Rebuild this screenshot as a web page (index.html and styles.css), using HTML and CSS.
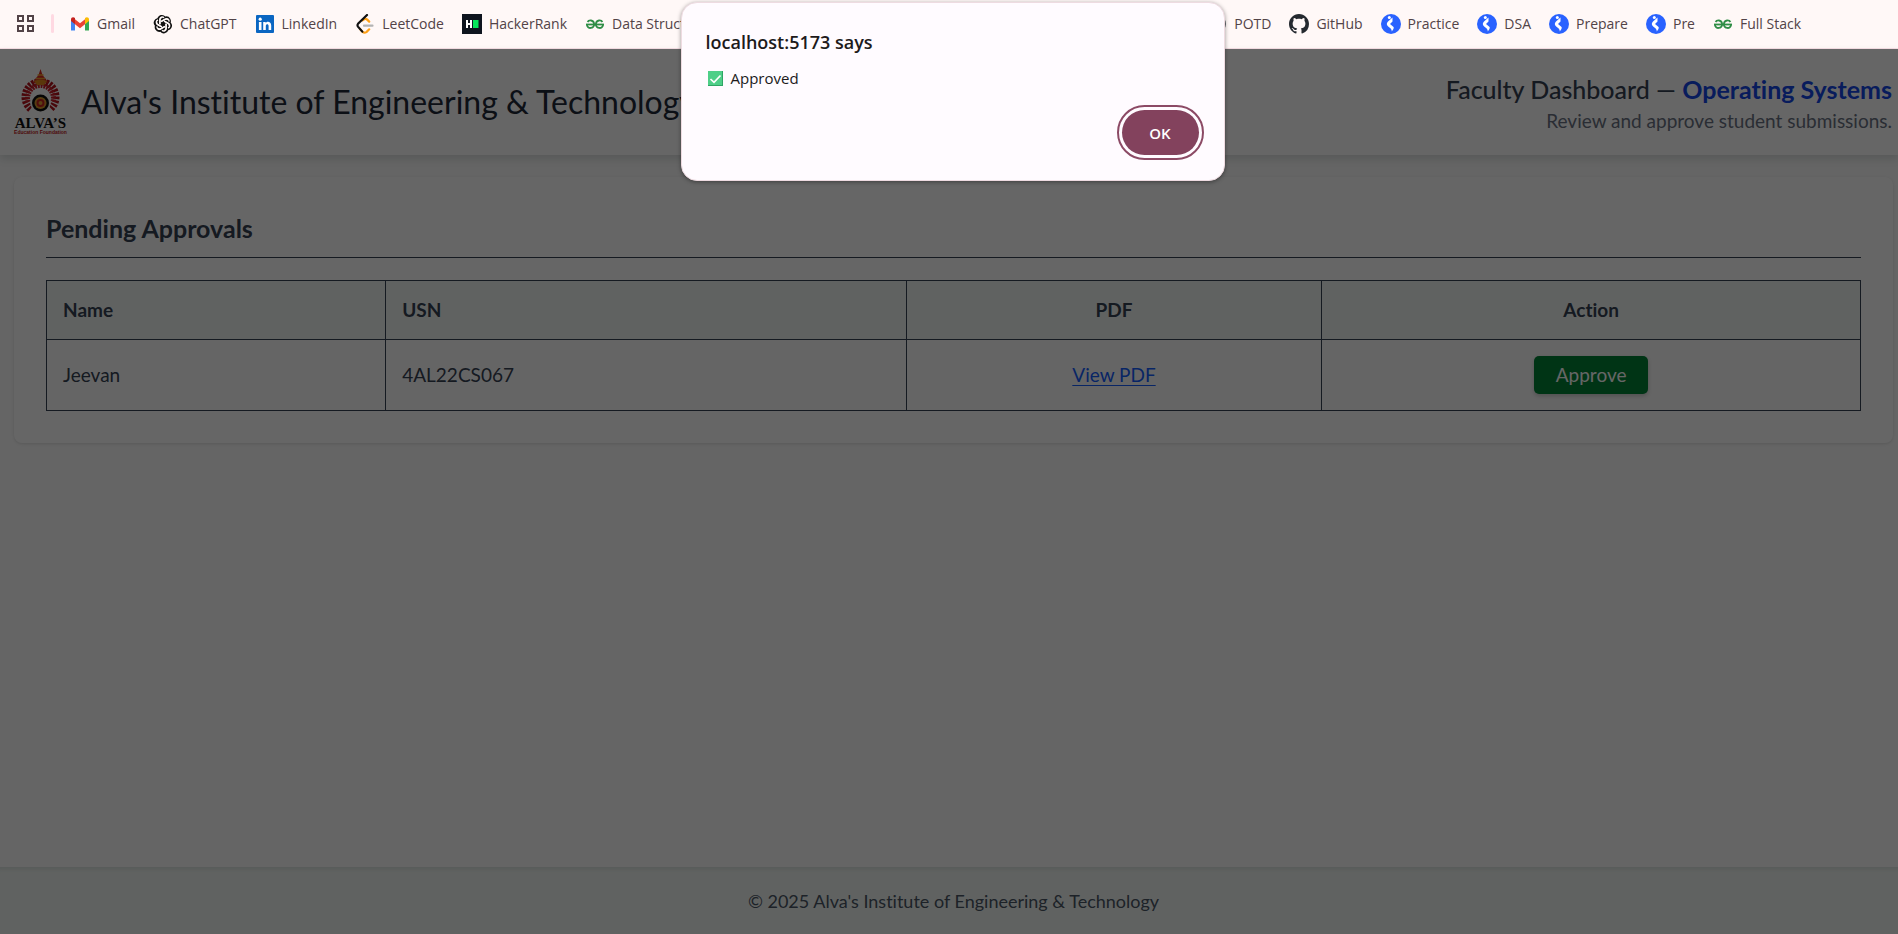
FILE: index.html
```html
<!DOCTYPE html>
<html lang="en">
<head>
<meta charset="utf-8">
<title>Faculty Dashboard</title>
<link rel="stylesheet" href="styles.css">
</head>
<body>
<svg class="defs" aria-hidden="true">
  <symbol id="gfg" viewBox="0 0 20 20"><g fill="none" stroke="#2f8d46" stroke-width="1.800"><path d="M1 10.500H19"/><path d="M2.600 8C3.600 6 8.600 5.300 9.100 10C9.500 15 2 15.300 2 10.800"/><path d="M17.400 8C16.400 6 11.400 5.300 10.900 10C10.500 15 18 15.300 18 10.800"/></g></symbol>
  <symbol id="prac" viewBox="0 0 20 20"><circle cx="10" cy="10" r="10" fill="#2962ff"/><circle cx="8.300" cy="3.500" r="1.500" fill="#fff"/><path d="M11.500 3.500V7.500L9 10L12.300 12.800C13 13.500 12.800 14.500 12.300 15.300L10.800 17.600C11 15.500 9.500 14 7.200 12.500C5.300 11.200 5.500 9 7 7.600Z" fill="#fff"/></symbol>
</svg>
<nav class="bookmarks" aria-label="Bookmarks">
  <button class="apps" aria-label="Apps"><svg viewBox="0 0 17 17" width="17" height="17" fill="none" stroke="#524347" stroke-width="2"><path d="M1 1h5v5H1zM11 1h5v5h-5zM1 11h5v5H1zM11 11h5v5h-5z"/></svg></button>
  <span class="divider"></span>
  <div class="links">
    <a href="#"><svg viewBox="0 0 20 20"><path d="M1 5v11.500h4V9.500z" fill="#4285f4"/><path d="M19 5v11.500h-4V9.500z" fill="#34a853"/><path d="M5 5.200l5 4 5-4v5l-5 4-5-4z" fill="#ea4335"/><path d="M1 5.400C1 3 3.500 2.700 5 4v6.200L1 7z" fill="#c5221f"/><path d="M19 5.400C19 3 16.500 2.700 15 4v6.200L19 7z" fill="#fbbc04"/></svg>Gmail</a>
    <a href="#"><svg viewBox="0 0 24 24"><path fill="#111" d="M21.200 10.100a5.500 5.500 0 0 0-.5-4.500 5.600 5.600 0 0 0-6-2.700A5.600 5.600 0 0 0 5.300 5a5.500 5.500 0 0 0-3.700 2.700 5.600 5.600 0 0 0 .7 6.500 5.500 5.500 0 0 0 .5 4.500 5.600 5.600 0 0 0 6 2.700 5.600 5.600 0 0 0 9.500-2 5.500 5.500 0 0 0 3.700-2.700 5.600 5.600 0 0 0-.8-6.600z"/><g fill="none" stroke="#fff8f7" stroke-width="1.700"><g id="petal"><path d="M8.200 12V6.700a3 3 0 0 1 5-2.300M9.600 9.200l4.800-2.800a3.300 3.300 0 0 1 3.700.3"/></g><use href="#petal" transform="rotate(60 12 12)"/><use href="#petal" transform="rotate(120 12 12)"/><use href="#petal" transform="rotate(180 12 12)"/><use href="#petal" transform="rotate(240 12 12)"/><use href="#petal" transform="rotate(300 12 12)"/></g></svg>ChatGPT</a>
    <a href="#"><svg viewBox="0 0 20 20"><rect x="1" y="1" width="18" height="18" rx="1" fill="#0a66c2"/><circle cx="5.200" cy="5.200" r="1.600" fill="#fff"/><path d="M3.900 8h2.600v8H3.900zM8.200 8h2.500v1.100c1.400-2.200 5.500-1.500 5.500 2.300V16h-2.600v-4c0-2.600-2.800-2.300-2.800 0v4H8.200z" fill="#fff"/></svg>LinkedIn</a>
    <a href="#"><svg viewBox="0 0 20 20" fill="none" stroke-width="2.200" stroke-linecap="round"><path d="M7.500 6.300L9.500 5q1.500-.6 2.700.6l2 2M5 15l2.500 2.800q2 1.500 4.200 0l2.500-2.500" stroke="#ffa116"/><path d="M12 1L3 9.800q-1 1.300 0 2.800l4.300 5" stroke="#111"/><path d="M9 11.700h8.500" stroke="#b3b3b3"/></svg>LeetCode</a>
    <a href="#"><svg viewBox="0 0 20 20"><path d="M0 0h20v20H0z" fill="#0e141e"/><path d="M4 6h2v3h2V6h2v8H8v-3H6v3H4z" fill="#fff"/><path d="M11 6h5.500v8H11z" fill="#05e65a"/></svg>HackerRank</a>
    <a href="#"><svg><use href="#gfg"/></svg>Data Struct</a>
  </div>
  <div class="links links-end">
    <a href="#"><svg viewBox="0 0 20 20" fill="none" stroke="#5f6368" stroke-width="2"><circle cx="10" cy="10" r="8"/><path d="M2 10h16M10 2q-7 8 0 16q7-8 0-16"/></svg>POTD</a>
    <a href="#"><svg viewBox="0 0 16 16"><path fill="#24292f" d="M8 0C3.580 0 0 3.580 0 8c0 3.540 2.290 6.530 5.470 7.590.4.070.55-.17.55-.38 0-.19-.01-.82-.01-1.490-2.010.37-2.530-.49-2.690-.94-.09-.23-.48-.94-.82-1.130-.28-.15-.68-.52-.01-.53.63-.01 1.080.58 1.230.82.72 1.210 1.870.87 2.330.66.07-.52.28-.87.51-1.070-1.780-.2-3.640-.89-3.640-3.950 0-.87.31-1.590.82-2.150-.08-.2-.36-1.020.08-2.120 0 0 .67-.21 2.200.82.64-.18 1.320-.27 2-.27s1.360.09 2 .27c1.530-1.040 2.200-.82 2.200-.82.44 1.100.16 1.920.08 2.120.51.56.82 1.270.82 2.150 0 3.070-1.870 3.750-3.650 3.950.29.25.54.73.54 1.480 0 1.070-.01 1.930-.01 2.200 0 .21.15.46.55.38A8 8 0 0 0 16 8c0-4.420-3.580-8-8-8z"/></svg>GitHub</a>
    <a href="#"><svg><use href="#prac"/></svg>Practice</a>
    <a href="#"><svg><use href="#prac"/></svg>DSA</a>
    <a href="#"><svg><use href="#prac"/></svg>Prepare</a>
    <a href="#"><svg><use href="#prac"/></svg>Pre</a>
    <a href="#"><svg><use href="#gfg"/></svg>Full Stack</a>
  </div>
</nav>
<div class="page">
  <header class="header">
    <div class="brand">
      <svg class="logo" viewBox="0 0 56 66" role="img" aria-label="Alva's Education Foundation">
        <g fill="none" stroke="#b3131c"><path d="M17.500 40A15.500 15.500 0 1 1 37.500 40" stroke-width="7" stroke-dasharray="2.400 1.200"/><path d="M15 33A13 13 0 1 1 40 33" stroke="#c8202a" stroke-width="5" stroke-dasharray="2 1"/></g>
        <path d="M27.500 0l2 6 4 5 1.500 3h-15l1.500-3 4-5z" fill="#d92b20"/><path d="M24.500 6h6M23 9.500h9" stroke="#f0a030" stroke-width="1.500"/><path d="M21 12q6.500-3 13 0l-3 4H24z" fill="#e08a1c"/>
        <circle cx="27.500" cy="34" r="10" fill="#fff"/><circle cx="27.500" cy="34" r="8.500" fill="#111"/><circle cx="27.500" cy="34" r="6" fill="#d99a2b"/><circle cx="27.500" cy="34" r="4" fill="#c7221f"/><circle cx="27.500" cy="34" r="2" fill="#e0a030"/>
        <text x="27.500" y="59" class="logo-name">ALVA’S</text>
        <text x="27.500" y="65" class="logo-sub">Education Foundation</text>
      </svg>
      <h1>Alva's Institute of Engineering &amp; Technology</h1>
    </div>
    <div class="heading">
      <h2>Faculty Dashboard — <strong>Operating Systems</strong></h2>
      <p>Review and approve student submissions.</p>
    </div>
  </header>
  <main class="main">
    <section class="card">
      <h2>Pending Approvals</h2>
      <table>
        <colgroup><col class="c-name"><col class="c-usn"><col class="c-pdf"><col class="c-action"></colgroup>
        <thead><tr><th>Name</th><th>USN</th><th class="mid">PDF</th><th class="mid">Action</th></tr></thead>
        <tbody><tr><td>Jeevan</td><td>4AL22CS067</td><td class="mid"><a href="#">View PDF</a></td><td class="mid"><button class="approve">Approve</button></td></tr></tbody>
      </table>
    </section>
  </main>
  <footer class="footer">© 2025 Alva's Institute of Engineering &amp; Technology</footer>
  <div class="scrim"></div>
</div>
<div class="overlay">
  <div class="dialog" role="alertdialog" aria-labelledby="dlg-title" aria-describedby="dlg-msg">
    <h2 id="dlg-title">localhost:5173 says</h2>
    <p id="dlg-msg"><svg viewBox="0 0 15 15" width="15" height="15" role="img" aria-label="Check"><path d="M0 0h15v15H0z" fill="#4fcf88"/><path d="M0 14.500h15M14.500 0v15" stroke="#2fa565"/><path d="M2.500 8l3.500 3.300L12.500 4.500" fill="none" stroke="#fff" stroke-width="1.700"/></svg>Approved</p>
    <button class="ok">OK</button>
  </div>
</div>
</body>
</html>
```
FILE: styles.css
```css
* { box-sizing: border-box; }
body {
  margin: 0;
  min-height: 100vh;
  display: flex;
  flex-direction: column;
  position: relative;
  font-family: Lato, "Liberation Sans", sans-serif;
  font-size: 19px;
  line-height: 28px;
  font-variant-ligatures: none;
  color: #364153;
}
h1, h2, p { margin: 0; }
button { font: inherit; border: 0; cursor: pointer; }
.defs { position: absolute; width: 0; height: 0; }

.bookmarks {
  height: 49px;
  flex: none;
  display: flex;
  align-items: center;
  padding: 0 97px 1px 17px;
  background: #fff8f7;
  border-bottom: 1px solid #f5dde3;
  font: 14px/20px "Open Sans", "Noto Sans", sans-serif;
  color: #524347;
}
.apps { display: flex; padding: 0; background: none; }
.divider { width: 3px; height: 19px; margin: 0 16px 0 17px; border-radius: 2px; background: #ffd9e2; }
.links { display: flex; gap: 18px; }
.links-end { margin-left: auto; }
.links a { display: flex; align-items: center; gap: 7px; color: inherit; text-decoration: none; white-space: nowrap; }
.links svg { width: 20px; height: 20px; }

.page { flex: 1; display: flex; flex-direction: column; position: relative; background: #fcfcfc; }
.scrim { position: absolute; inset: 0; background: rgba(0, 0, 0, 0.6); }

.header {
  display: flex;
  justify-content: space-between;
  align-items: center;
  min-height: 106px;
  padding: 0 6px 0 13px;
  background: #fff;
  box-shadow: 0 4px 8px rgba(40, 70, 60, 0.16);
}
.brand { display: flex; align-items: center; gap: 12px; }
.logo { width: 56px; height: 66px; }
.logo-name { font: bold 15px "Liberation Serif", serif; text-anchor: middle; fill: #111; }
.logo-sub { font: bold 5px "Liberation Sans", sans-serif; text-anchor: middle; fill: #c01820; }
h1 { font-size: 32px; line-height: 40px; font-weight: 400; color: #1e2939; }
.heading { padding-top: 5px; text-align: right; }
.heading h2 { font-size: 25px; line-height: 32px; font-weight: 500; color: #364153; }
.heading strong { font-weight: 700; color: #1447e6; }
.heading p { line-height: 32px; color: #6a7282; }

.main { flex: 1; padding: 22px 5px 22px 14px; }
.card { padding: 32px; background: #fff; border-radius: 8px; box-shadow: 0 1px 3px rgba(0, 0, 0, 0.12); }
.card h2 {
  font-size: 25px;
  line-height: 36px;
  font-weight: 700;
  padding: 1px 0 11px;
  margin-bottom: 22px;
  border-bottom: 1px solid #364153;
}
table { width: 100%; border-collapse: collapse; table-layout: fixed; }
th, td { border: 1px solid #364153; padding: 15px 16px; text-align: left; }
th { font-weight: 700; background: #f1f6f3; }
td { padding: 16px; background: #fcfcfc; }
th.mid, td.mid { text-align: center; }
.c-name { width: 18.700%; }
.c-usn { width: 28.700%; }
.c-pdf { width: 22.900%; }
td a { color: #155dfc; text-underline-offset: 3px; }
.approve {
  padding: 5px 22px;
  border-radius: 5px;
  background: #008236;
  color: #fff;
  box-shadow: 0 2px 4px rgba(0, 0, 0, 0.2);
}
.footer {
  padding: 20px 0 19px 9px;
  background: #f1f6f3;
  box-shadow: inset 0 6px 5px -4px rgba(40, 70, 60, 0.12);
  text-align: center;
  font-size: 18px;
  color: #4a5565;
}

.overlay { position: absolute; top: 2px; left: 0; width: 100%; padding-left: 7px; display: flex; justify-content: center; }
.dialog {
  width: 544px;
  padding: 23px 21px 21px 24px;
  display: flex;
  flex-direction: column;
  background: #fffbff;
  border: 1px solid #eedbe1;
  border-radius: 16px;
  box-shadow: 0 1px 4px rgba(0, 0, 0, 0.4);
  font: 15px/24px "Open Sans", "Noto Sans", sans-serif;
  color: #201a1b;
}
.dialog h2 { font-size: 18px; line-height: 32px; font-weight: 600; }
.dialog p { display: flex; align-items: center; gap: 8px; padding: 8px 2px; }
.ok {
  align-self: flex-end;
  width: 77px;
  height: 45px;
  margin: 12px 4px 4px;
  border-radius: 23px;
  background: #83425d;
  color: #fff;
  font-weight: 600;
  outline: 2px solid #8c4a65;
  outline-offset: 3px;
}
```
